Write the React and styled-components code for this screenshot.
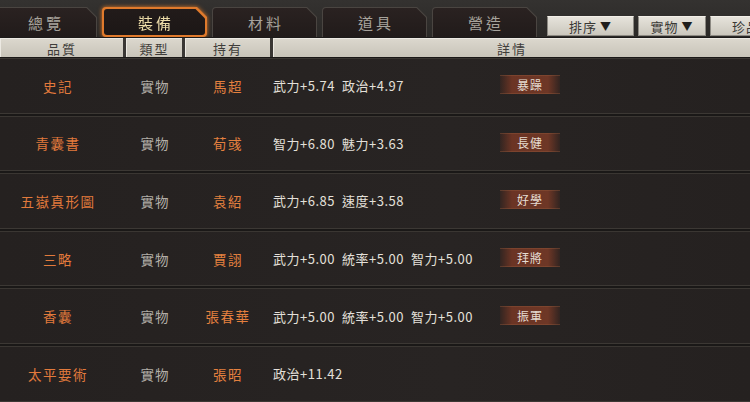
import React from "react";
import styled, { createGlobalStyle } from "styled-components";

const GlobalStyle = createGlobalStyle`
  html, body {
    margin: 0;
    padding: 0;
    background: #1b1918;
  }
  body {
    font-family: "Noto Sans CJK TC", "Noto Sans", sans-serif;
  }
`;

const Screen = styled.div`
  width: 750px;
  height: 402px;
  overflow: hidden;
  background: #1c1a19;
  display: flex;
  flex-direction: column;
`;

const TopBar = styled.div`
  height: 37px;
  flex: none;
  display: flex;
  align-items: flex-end;
  background: linear-gradient(#343230, #2b2927);
  overflow: hidden;
`;

const Tabs = styled.div`
  display: flex;
  gap: 5px;
  margin-left: -8px;
  align-items: flex-end;
  height: 100%;
`;

const TabSlot = styled.div`
  flex: none;
  padding-top: 6px;
  filter: ${p => (p.active ? "drop-shadow(0 0 2px rgba(240, 130, 40, 0.9))" : "none")};
`;

const TabEdge = styled.div`
  width: 105px;
  height: 30px;
  box-sizing: border-box;
  padding: ${p => (p.active ? "2px" : "1px 1px 0 1px")};
  background: ${p => (p.active ? "#e07a2c" : "#4a4541")};
  border-radius: 4px 0 ${p => (p.active ? "4px 4px" : "0 0")};
  clip-path: polygon(0 0, calc(100% - 10px) 0, 100% 10px, 100% 100%, 0 100%);
`;

const TabFace = styled.div`
  height: 100%;
  border-radius: 3px 0 ${p => (p.active ? "3px 3px" : "0 0")};
  background: ${p => (p.active ? "linear-gradient(#221b1a, #1c1716)" : "linear-gradient(#2a2221, #211b1a)")};
  clip-path: polygon(0 0, calc(100% - 9.5px) 0, 100% 9.5px, 100% 100%, 0 100%);
  display: flex;
  align-items: center;
  justify-content: center;
  color: ${p => (p.active ? "#ecdca8" : "#a7a39c")};
  font-size: 15px;
  letter-spacing: 3px;
  text-indent: 3px;
`;

const Buttons = styled.div`
  display: flex;
  gap: 4px;
  margin-left: 10px;
  margin-bottom: 1px;
  align-items: flex-end;
`;

const SortButton = styled.div`
  flex: none;
  width: ${p => p.w}px;
  height: 20px;
  box-sizing: border-box;
  display: flex;
  align-items: center;
  justify-content: center;
  gap: 3px;
  background: linear-gradient(#e6e3db, #cbc7bd);
  border: 1px solid #8c8982;
  border-top-color: #f2efe8;
  color: #3a3936;
  font-size: 13px;
  letter-spacing: 1px;
  white-space: nowrap;
`;

const Caret = styled.span`
  font-size: 11px;
  color: #1f1e1c;
`;

const HeadRow = styled.div`
  flex: none;
  height: 19px;
  margin-top: 1px;
  display: grid;
  grid-template-columns: 123px 56px 85px 1fr;
  column-gap: 3px;
  background: #3a3734;
`;

const HeadCell = styled.div`
  display: flex;
  align-items: center;
  justify-content: center;
  background: linear-gradient(#dbd7cd, #c8c4b9);
  border-top: 1px solid #ece9e2;
  border-left: 1px solid #ece9e2;
  color: #3f3d3a;
  font-size: 13px;
  letter-spacing: 2px;
  line-height: 1;
`;

const List = styled.div`
  display: flex;
  flex-direction: column;
  gap: 2px;
  padding-top: 1px;
  background: #1a1817;
`;

const Row = styled.div`
  flex: none;
  height: 55.6px;
  box-sizing: border-box;
  display: grid;
  grid-template-columns: 116px 78px 68px 238px 60px 1fr;
  align-items: center;
  background: linear-gradient(90deg, #252120, #282423 60%, #252120);
  border-top: 1px solid #3a3632;
  border-bottom: 1px solid #3c3834;
`;

const Cell = styled.div`
  text-align: center;
  font-size: 13.5px;
  letter-spacing: ${p => (p.spaced ? "1.5px" : "1px")};
  color: ${p => p.color};
  white-space: nowrap;
`;

const Details = styled.div`
  display: flex;
  gap: 7px;
  padding-left: 11px;
  color: #e4e0da;
  font-size: 13px;
  white-space: nowrap;
`;

const Stat = styled.span`
  letter-spacing: 0.5px;
`;

const Badge = styled.div`
  height: 17px;
  margin-top: -2px;
  display: flex;
  align-items: center;
  justify-content: center;
  background: linear-gradient(90deg, rgba(90, 42, 28, 0.2), #6b3424 20%, #6e3726 80%, rgba(90, 42, 28, 0.2));
  border-top: 1px solid rgba(150, 90, 60, 0.4);
  border-bottom: 1px solid rgba(150, 90, 60, 0.4);
  color: #e6ddd2;
  font-size: 12px;
  letter-spacing: 1px;
`;

const tabs = ["總覽", "裝備", "材料", "道具", "營造"];

const items = [
  { name: "史記", holder: "馬超", stats: ["武力+5.74", "政治+4.97"], badge: "暴躁" },
  { name: "青囊書", holder: "荀彧", stats: ["智力+6.80", "魅力+3.63"], badge: "長健" },
  { name: "五嶽真形圖", holder: "袁紹", stats: ["武力+6.85", "速度+3.58"], badge: "好學" },
  { name: "三略", holder: "賈詡", stats: ["武力+5.00", "統率+5.00", "智力+5.00"], badge: "拜將" },
  { name: "香囊", holder: "張春華", stats: ["武力+5.00", "統率+5.00", "智力+5.00"], badge: "振軍" },
  { name: "太平要術", holder: "張昭", stats: ["政治+11.42"] }
];

export default function App() {
  return (
    <Screen>
      <GlobalStyle />
      <TopBar>
        <Tabs>
          {tabs.map(label => (
            <TabSlot key={label} active={label === "裝備"}>
              <TabEdge active={label === "裝備"}>
                <TabFace active={label === "裝備"}>{label}</TabFace>
              </TabEdge>
            </TabSlot>
          ))}
        </Tabs>
        <Buttons>
          <SortButton w={87}>
            排序<Caret>▼</Caret>
          </SortButton>
          <SortButton w={68}>
            實物<Caret>▼</Caret>
          </SortButton>
          <SortButton w={87}>
            珍品<Caret>▼</Caret>
          </SortButton>
        </Buttons>
      </TopBar>
      <HeadRow>
        <HeadCell>品質</HeadCell>
        <HeadCell>類型</HeadCell>
        <HeadCell>持有</HeadCell>
        <HeadCell>詳情</HeadCell>
      </HeadRow>
      <List>
        {items.map(item => (
          <Row key={item.name}>
            <Cell color="#e27a3c" spaced>
              {item.name}
            </Cell>
            <Cell color="#b3afa8">實物</Cell>
            <Cell color="#e4803f" spaced>
              {item.holder}
            </Cell>
            <Details>
              {item.stats.map(s => (
                <Stat key={s}>{s}</Stat>
              ))}
            </Details>
            {item.badge ? <Badge>{item.badge}</Badge> : <span />}
          </Row>
        ))}
      </List>
    </Screen>
  );
}
